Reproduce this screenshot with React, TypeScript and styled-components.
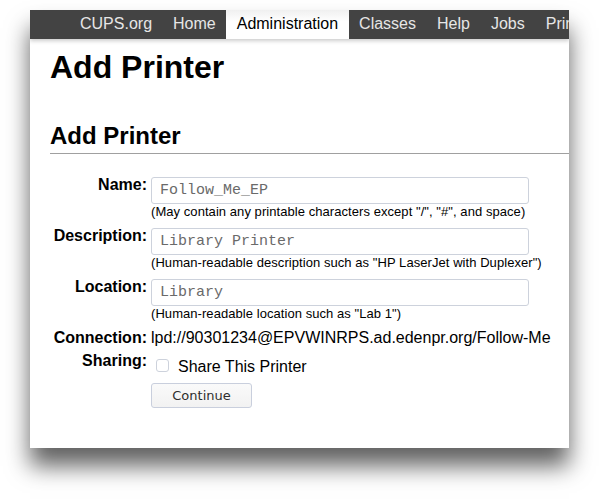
import React from 'react'
import styled, { createGlobalStyle } from 'styled-components'

const GlobalStyle = createGlobalStyle`
    html, body {
        margin: 0;
        padding: 0;
        background: #fff;
    }
    body {
        font-family: "Liberation Sans", Arial, sans-serif;
        color: #000;
    }
`

const Page = styled.div`
    width: 599px;
    height: 499px;
    padding: 10px 0 0 30px;
    box-sizing: border-box;
    overflow: hidden;
`

const Window = styled.div`
    width: 539px;
    height: 438px;
    background: #fff;
    overflow: hidden;
    box-shadow: 0 18px 22px rgba(0, 0, 0, 0.62);
`

const NavBar = styled.nav`
    position: relative;
    z-index: 1;
    display: flex;
    height: 29px;
    padding-left: 39.5px;
    background: #434343;
    box-shadow: 0 2px 4px rgba(0, 0, 0, 0.2);
    white-space: nowrap;
`

const NavItem = styled.a<{ $active?: boolean }>`
    display: block;
    flex: none;
    padding: 0 10.5px;
    line-height: 28px;
    font-size: 16px;
    text-decoration: none;
    color: ${p => (p.$active ? '#000' : '#e6e6e6')};
    background: ${p => (p.$active ? 'linear-gradient(#f0f0f0, #fff 40%)' : 'transparent')};
`

const Content = styled.main`
    padding-left: 20px;
`

const PageTitle = styled.h1`
    margin: 10px 0 0;
    font-size: 32px;
    font-weight: bold;
    line-height: normal;
`

const SectionTitle = styled.h2`
    margin: 36px 0 0;
    padding-bottom: 3px;
    font-size: 24px;
    font-weight: bold;
    line-height: normal;
    border-bottom: 1px solid #a0a0a0;
`

const Form = styled.form`
    display: grid;
    grid-template-columns: 97px 1fr;
    column-gap: 4px;
    row-gap: 5px;
    margin-top: 22px;
`

const Label = styled.div`
    text-align: right;
    font-size: 16px;
    font-weight: bold;
    line-height: 18px;
`

const Value = styled.div`
    font-size: 16px;
    line-height: 18px;
    white-space: nowrap;
`

const TextInput = styled.input`
    display: block;
    box-sizing: border-box;
    width: 378px;
    height: 27px;
    margin: 1px 0 0;
    padding: 0 8px;
    border: 1px solid #cdd2dc;
    border-radius: 3px;
    background: #fff;
    font-family: "Liberation Mono", "Courier New", monospace;
    font-size: 15px;
    color: #6a6a6a;
    outline: none;
`

const Help = styled.div`
    font-size: 13px;
    letter-spacing: 0.06px;
    line-height: 16px;
    padding-bottom: 2px;
`

const CheckRow = styled.label`
    display: flex;
    align-items: flex-start;
    padding-top: 4px;
    font-size: 16px;
    line-height: 22px;
`

const CheckBox = styled.span`
    flex: none;
    width: 13px;
    height: 13px;
    margin: 3px 9px 0 5px;
    box-sizing: border-box;
    border: 1px solid #cdd2dc;
    border-radius: 3px;
    background: #fff;
`

const Button = styled.button`
    width: 101px;
    height: 25px;
    padding: 0;
    border: 1px solid #c9cfdd;
    border-radius: 3px;
    background: linear-gradient(#fafafa, #f2f2f2);
    font-family: "DejaVu Sans", "Noto Sans", sans-serif;
    font-size: 13px;
    color: #2e2e2e;
`

const navItems = ['CUPS.org', 'Home', 'Administration', 'Classes', 'Help', 'Jobs', 'Printers']

const fields = [
    { label: 'Name:', value: 'Follow_Me_EP', help: '(May contain any printable characters except "/", "#", and space)' },
    { label: 'Description:', value: 'Library Printer', help: '(Human-readable description such as "HP LaserJet with Duplexer")' },
    { label: 'Location:', value: 'Library', help: '(Human-readable location such as "Lab 1")' },
]

const App = () => {
    return (
        <Page>
            <GlobalStyle />
            <Window>
                <NavBar>
                    {navItems.map(item => (
                        <NavItem key={item} $active={item === 'Administration'}>{item}</NavItem>
                    ))}
                </NavBar>
                <Content>
                    <PageTitle>Add Printer</PageTitle>
                    <SectionTitle>Add Printer</SectionTitle>
                    <Form onSubmit={e => e.preventDefault()}>
                        {fields.map(field => (
                            <React.Fragment key={field.label}>
                                <Label>{field.label}</Label>
                                <Value>
                                    <TextInput defaultValue={field.value} />
                                    <Help>{field.help}</Help>
                                </Value>
                            </React.Fragment>
                        ))}
                        <Label>Connection:</Label>
                        <Value>lpd://90301234@EPVWINRPS.ad.edenpr.org/Follow-Me</Value>
                        <Label>Sharing:</Label>
                        <Value>
                            <CheckRow>
                                <CheckBox />
                                Share This Printer
                            </CheckRow>
                        </Value>
                        <span />
                        <Value>
                            <Button type="submit">Continue</Button>
                        </Value>
                    </Form>
                </Content>
            </Window>
        </Page>
    )
}

export default App
